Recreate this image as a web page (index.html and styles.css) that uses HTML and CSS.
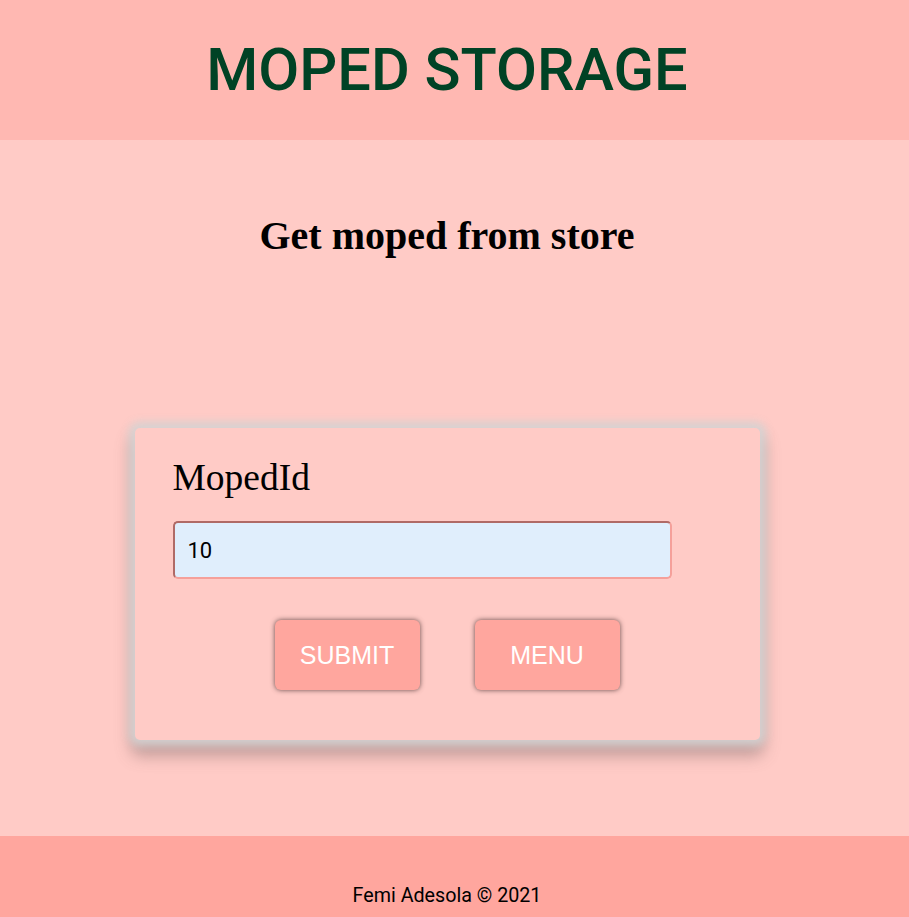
FILE: index.html
```html
<!DOCTYPE html>
<html lang="en">
<head>
<meta charset="utf-8">
<title>Moped Storage</title>
<link rel="stylesheet" href="styles.css">
</head>
<body>
<header class="site-header">
  <h1 class="site-title">MOPED STORAGE</h1>
</header>
<main class="main">
  <h2 class="page-title">Get moped from store</h2>
  <form class="card">
    <label class="field-label" for="mopedId">MopedId</label>
    <input class="field-input" id="mopedId" type="text" value="10">
    <div class="actions">
      <button class="btn" type="button">SUBMIT</button>
      <button class="btn" type="button">MENU</button>
    </div>
  </form>
</main>
<footer class="site-footer">Femi Adesola © 2021</footer>
</body>
</html>
```
FILE: styles.css
```css
* { box-sizing: border-box; }
html, body { margin: 0; padding: 0; }
body {
  background: #ffcbc6;
  font-family: "Liberation Serif", serif;
  min-height: 917px;
  display: flex;
  flex-direction: column;
}
.site-header {
  background: #ffb8b2;
  height: 140px;
  display: flex;
  align-items: center;
  justify-content: center;
  padding-right: 15px;
}
.site-title {
  margin: 0;
  font-family: Roboto, sans-serif;
  font-weight: 500;
  font-size: 59.5px;
  color: #004225;
}
.main {
  flex: 1;
  display: flex;
  flex-direction: column;
  align-items: center;
  padding-right: 15px;
}
.page-title {
  margin: 0;
  padding-top: 72px;
  font-size: 40px;
  font-weight: bold;
  color: #000;
  line-height: 48px;
}
.card {
  margin-top: 168px;
  width: 625px;
  height: 312px;
  border-radius: 5px;
  background: #ffcbc6;
  box-shadow: 0 0 8px 6px rgba(212, 212, 212, 0.9), 0 12px 16px 4px rgba(110, 90, 90, 0.42);
  padding: 30px 38px;
  display: flex;
  flex-direction: column;
}
.field-label {
  font-size: 37.5px;
  line-height: 40px;
  color: #000;
}
.field-input {
  margin-top: 23px;
  width: 499px;
  height: 58px;
  background: #e0eefc;
  border: 2px solid;
  border-color: #b06a66 #f5a09a #f5a09a #b06a66;
  border-radius: 5px;
  font-family: Roboto, sans-serif;
  font-size: 22px;
  padding: 0 13px;
  color: #000;
  outline: none;
}
.actions {
  margin-top: 41px;
  display: flex;
  justify-content: center;
  gap: 55px;
}
.btn {
  width: 145px;
  height: 70px;
  background: #ffa69e;
  color: #fff;
  border: none;
  border-radius: 6px;
  font-family: "Liberation Sans", Arial, sans-serif;
  font-size: 25px;
  box-shadow: 0 0 5px rgba(60, 40, 40, 0.8);
}
.site-footer {
  background: #ffa69e;
  height: 81px;
  margin-top: 96px;
  display: flex;
  align-items: flex-end;
  justify-content: center;
  padding-bottom: 10px;
  padding-right: 15px;
  font-family: Roboto, sans-serif;
  font-size: 19.7px;
  color: #000;
}
```
